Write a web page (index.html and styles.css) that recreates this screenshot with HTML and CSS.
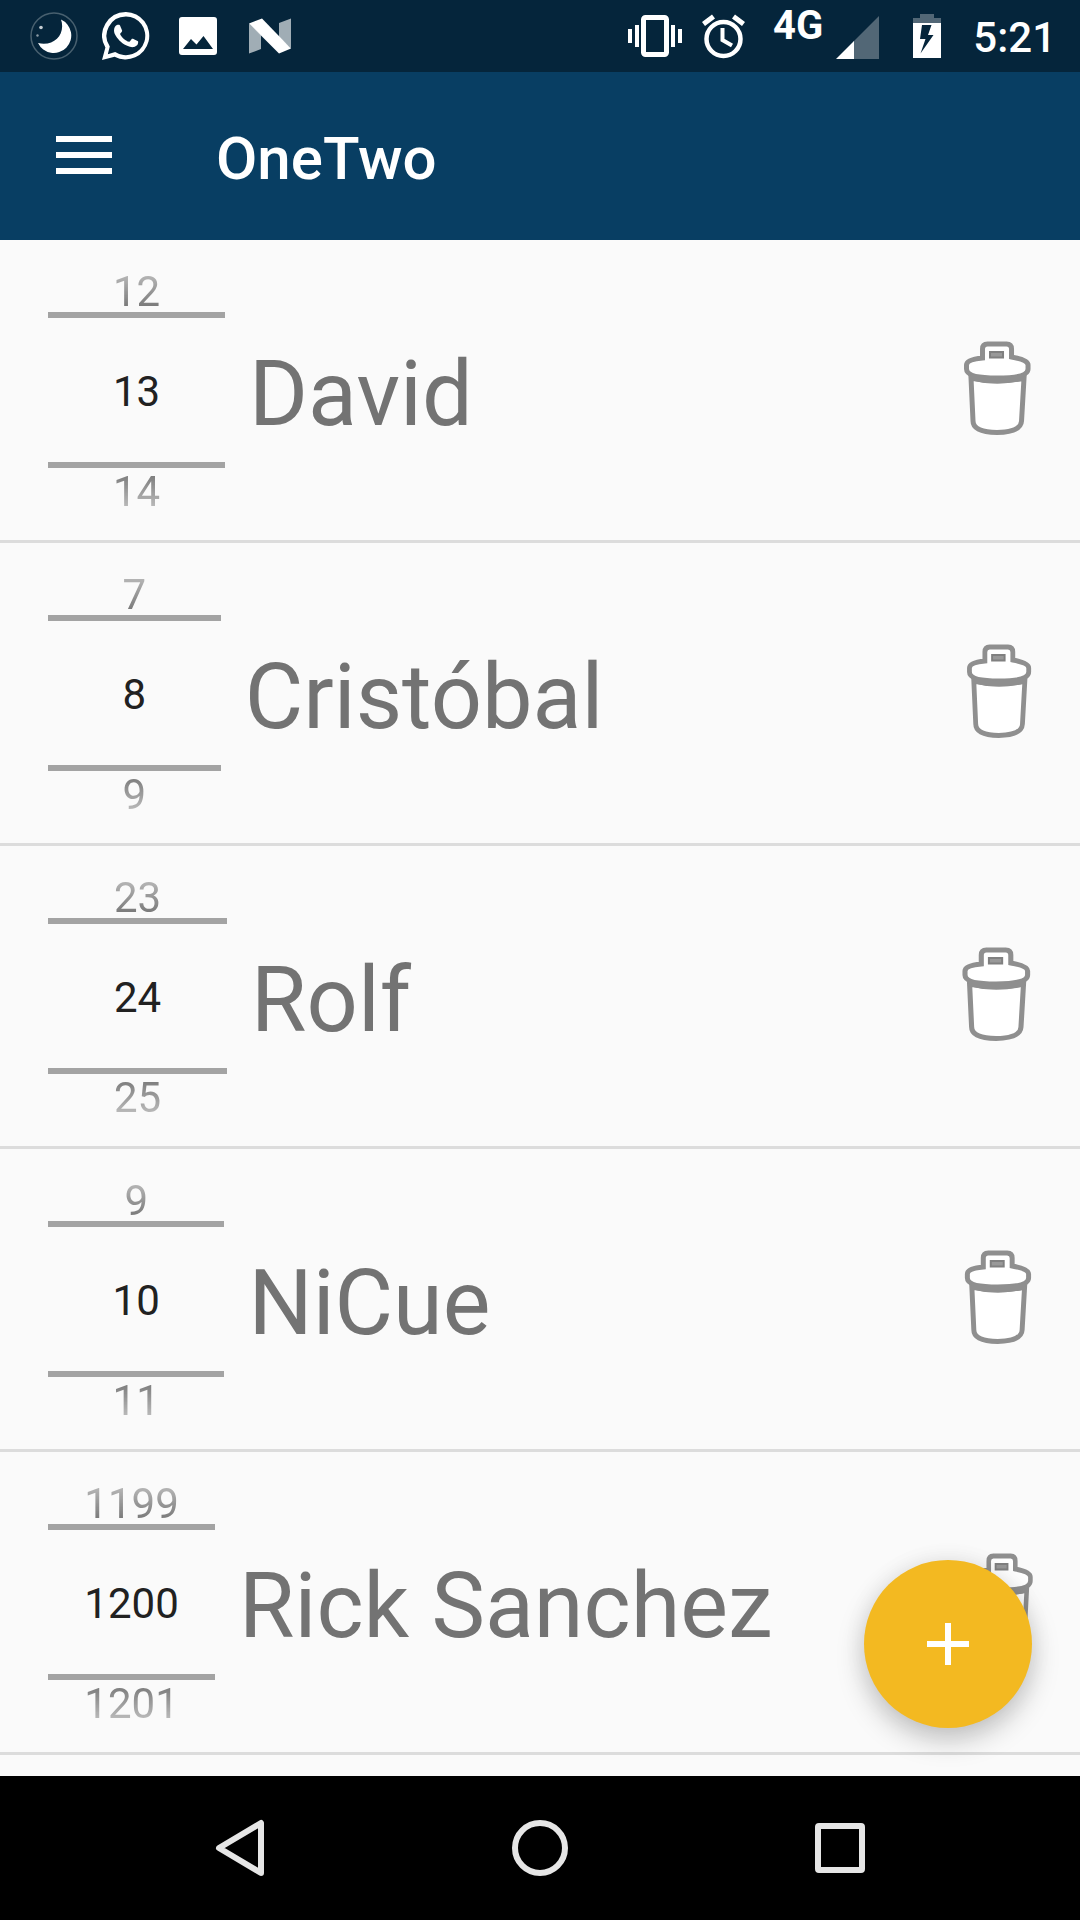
FILE: index.html
```html
<!DOCTYPE html>
<html lang="en">
<head>
<meta charset="utf-8">
<meta name="viewport" content="width=device-width, initial-scale=1">
<title>OneTwo</title>
<link rel="stylesheet" href="styles.css">
</head>
<body>
<svg class="defs" aria-hidden="true">
  <symbol id="trash" viewBox="8 20 118 100" preserveAspectRatio="none">
    <path class="trash-body" d="M41 58 L43 101 Q43 112 67 112.500 Q91 112 91.500 101 L94 58 Q67 64 41 58Z"/>
    <path class="trash-body" d="M52.500 38 L52.500 29 Q52.500 24 57.500 24 L76.500 24 Q81.500 24 81.500 29 L81.500 37 Q98 40 98 45 L98 49 Q98 58 67 58 Q36.500 58 36.500 49 L36.500 45 Q36.500 39.500 52.500 38Z"/>
    <path class="trash-seam" d="M40 57 Q67 64 95 57"/>
    <path class="trash-grip" d="M60 32H73V37.500H60Z"/>
  </symbol>
</svg>
<div class="screen">
  <div class="status-bar">
    <div class="status-group">
      <svg class="status-icon" viewBox="30 12 48 48" aria-hidden="true">
        <circle cx="54" cy="36" r="23" fill="none" stroke="#48606f" stroke-width="1.500"/>
        <path fill="#fff" d="M61 19.500A17.500 17.500 0 1 1 38 43C54 47 66 34 61 19.500Z"/>
        <circle cx="41" cy="27.500" r="1.800" fill="#c5cdd2"/><circle cx="37.500" cy="35.500" r="1.200" fill="#8d9ca6"/>
      </svg>
      <svg class="status-icon" viewBox="0 0 24 24" fill="#fff" aria-hidden="true">
        <path fill-rule="evenodd" d="M12 0A11.850 11.850 0 0 0 1.700 17.800L0 24L6.300 22.350A11.850 11.850 0 1 0 12 0ZM12 2.200A9.700 9.700 0 1 1 6.600 20L2.900 21.100L3.900 17.300A9.700 9.700 0 0 1 12 2.200Z"/>
        <path d="M17.472 14.382c-.297-.149-1.758-.867-2.030-.967-.273-.099-.471-.148-.670.150-.197.297-.767.966-.940 1.164-.173.199-.347.223-.644.075-.297-.150-1.255-.463-2.390-1.475-.883-.788-1.480-1.761-1.653-2.059-.173-.297-.018-.458.130-.606.134-.133.298-.347.446-.520.149-.174.198-.298.298-.497.099-.198.050-.371-.025-.520-.075-.149-.669-1.612-.916-2.207-.242-.579-.487-.500-.669-.510-.173-.008-.371-.010-.570-.010-.198 0-.520.074-.792.372-.272.297-1.040 1.016-1.040 2.479 0 1.462 1.065 2.875 1.213 3.074.149.198 2.096 3.200 5.077 4.487.709.306 1.262.489 1.694.625.712.227 1.360.195 1.871.118.571-.085 1.758-.719 2.006-1.413.248-.694.248-1.289.173-1.413-.074-.124-.272-.198-.570-.347"/>
      </svg>
      <svg class="status-icon" viewBox="174 12 48 48" aria-hidden="true">
        <path fill="#fff" fill-rule="evenodd" d="M182 17H214Q217 17 217 20V52Q217 55 214 55H182Q179 55 179 52V20Q179 17 182 17ZM183 49H213L203.500 36L196.500 44.500L191 39Z"/>
      </svg>
      <svg class="status-icon" viewBox="246 12 48 48" aria-hidden="true">
        <path fill="#a0adb5" d="M249 23.500L261 35V49L249 53.500ZM279 23L291 18.500V48.500L279 37Z"/>
        <path fill="#fff" d="M249 23.500L262 18.500L291 48.500L279 53.500Z"/>
      </svg>
    </div>
    <div class="status-group status-right">
      <svg class="status-icon" viewBox="633 12 48 48" overflow="visible" aria-hidden="true">
        <rect x="643.500" y="17.500" width="23" height="37" rx="2" fill="none" stroke="#fff" stroke-width="5"/>
        <path fill="#fff" d="M628 29h4v14h-4zM635 25h4v22h-4zM671 25h4v22h-4zM678 29h4v14h-4z"/>
      </svg>
      <svg class="status-icon" viewBox="703 12 48 48" overflow="visible" aria-hidden="true">
        <g fill="none" stroke="#fff"><circle cx="723.500" cy="39" r="17" stroke-width="4.500"/><path stroke-width="4" d="M722.500 28V40L732 45.500"/><path stroke-width="5" d="M703.500 24L713.500 16.500M733.500 16.500L743.500 24"/></g>
      </svg>
      <span class="network">4G</span>
      <svg class="status-icon signal" viewBox="834 12 48 48" aria-hidden="true">
        <path fill="#526776" d="M880 16V59H854V42Z"/><path fill="#fff" d="M855 41V59H837Z"/>
      </svg>
      <svg class="status-icon" viewBox="904 12 48 48" aria-hidden="true">
        <path fill="#526776" d="M914 23V18H921V14H935V18H942V23Z"/><path fill="#fff" fill-rule="evenodd" d="M914 23H942V58H914ZM923 25L921 39H926.500L921.500 53.500L934.500 35H929L932.500 25Z"/>
      </svg>
      <time class="clock">5:21</time>
    </div>
  </div>

  <header class="app-bar">
    <button class="icon-button" type="button" aria-label="Open menu">
      <svg class="menu-icon" viewBox="0 0 72 72"><path fill="#fff" d="M8 16h56v6H8zM8 32h56v6H8zM8 48h56v6H8z"/></svg>
    </button>
    <h1 class="title">OneTwo</h1>
  </header>

  <main class="content">
    <ul class="counters">
      <li class="counter">
        <div class="picker"><button class="step previous" type="button">12</button><input class="value" type="text" inputmode="numeric" value="13" aria-labelledby="name-1"><button class="step next" type="button">14</button></div>
        <span class="name" id="name-1">David</span>
        <button class="delete" type="button" aria-label="Delete David"><svg class="trash"><use href="#trash"/></svg></button>
      </li>
      <li class="counter">
        <div class="picker"><button class="step previous" type="button">7</button><input class="value" type="text" inputmode="numeric" value="8" aria-labelledby="name-2"><button class="step next" type="button">9</button></div>
        <span class="name" id="name-2">Cristóbal</span>
        <button class="delete" type="button" aria-label="Delete Cristóbal"><svg class="trash"><use href="#trash"/></svg></button>
      </li>
      <li class="counter">
        <div class="picker"><button class="step previous" type="button">23</button><input class="value" type="text" inputmode="numeric" value="24" aria-labelledby="name-3"><button class="step next" type="button">25</button></div>
        <span class="name" id="name-3">Rolf</span>
        <button class="delete" type="button" aria-label="Delete Rolf"><svg class="trash"><use href="#trash"/></svg></button>
      </li>
      <li class="counter">
        <div class="picker"><button class="step previous" type="button">9</button><input class="value" type="text" inputmode="numeric" value="10" aria-labelledby="name-4"><button class="step next" type="button">11</button></div>
        <span class="name" id="name-4">NiCue</span>
        <button class="delete" type="button" aria-label="Delete NiCue"><svg class="trash"><use href="#trash"/></svg></button>
      </li>
      <li class="counter">
        <div class="picker"><button class="step previous" type="button">1199</button><input class="value" type="text" inputmode="numeric" value="1200" aria-labelledby="name-5"><button class="step next" type="button">1201</button></div>
        <span class="name" id="name-5">Rick Sanchez</span>
        <button class="delete" type="button" aria-label="Delete Rick Sanchez"><svg class="trash"><use href="#trash"/></svg></button>
      </li>
    </ul>
    <button class="fab" type="button" aria-label="Add counter">
      <svg class="fab-icon" viewBox="0 0 42 42"><path fill="#fff" d="M18 0h6v18h18v6H24v18h-6V24H0v-6h18z"/></svg>
    </button>
  </main>

  <nav class="nav-bar" aria-label="System">
    <button class="nav-button" type="button" aria-label="Back"><svg class="nav-icon" viewBox="204 1812 72 72"><path d="M261 1823V1873L219 1848Z"/></svg></button>
    <button class="nav-button" type="button" aria-label="Home"><svg class="nav-icon" viewBox="504 1812 72 72"><circle cx="540" cy="1848" r="25"/></svg></button>
    <button class="nav-button" type="button" aria-label="Recent apps"><svg class="nav-icon" viewBox="804 1812 72 72"><rect x="818" y="1826" width="44" height="44" rx="1"/></svg></button>
  </nav>
</div>
</body>
</html>
```
FILE: styles.css
```css
* {
  box-sizing: border-box;
}

body {
  margin: 0;
  background: #fafafa;
  font-family: Roboto, "Liberation Sans", sans-serif;
}

button,
input {
  margin: 0;
  padding: 0;
  border: 0;
  background: none;
  font: inherit;
  color: inherit;
}

svg {
  display: block;
}

.defs {
  position: absolute;
  width: 0;
  height: 0;
}

.screen {
  display: flex;
  flex-direction: column;
  min-height: 100vh;
}

/* Status bar */
.status-bar {
  display: flex;
  justify-content: space-between;
  height: 72px;
  padding: 0 24px 0 30px;
  background: #05253b;
  color: #fff;
}

.status-group {
  display: flex;
  align-items: center;
  gap: 24px;
}

.status-right {
  gap: 22px;
}

.status-icon {
  width: 48px;
  height: 48px;
}

.network {
  align-self: flex-start;
  padding-top: 4px;
  font-size: 40px;
  font-weight: 700;
  line-height: 44px;
}

.signal {
  margin-left: -12px;
}

.clock {
  padding-top: 4px;
  font-size: 42px;
  font-weight: 500;
  line-height: 48px;
}

/* App bar */
.app-bar {
  display: flex;
  align-items: center;
  gap: 96px;
  height: 168px;
  padding: 0 48px;
  background: #083e63;
  color: #fff;
}

.menu-icon {
  width: 72px;
  height: 72px;
}

.title {
  margin: 0;
  padding-top: 6px;
  font-size: 60px;
  font-weight: 500;
  line-height: 72px;
}

/* Counter list */
.content {
  position: relative;
  flex: 1;
}

.counters {
  margin: 0;
  padding: 0;
  list-style: none;
}

.counter {
  display: flex;
  align-items: center;
  padding: 0 24px 0 48px;
  border-bottom: 3px solid #dcdcdc;
}

.picker {
  display: flex;
  flex: 1 0 161px;
  flex-direction: column;
  margin-right: 24px;
  color: #212121;
  font-size: 42px;
  line-height: 40px;
  text-align: center;
}

.step {
  height: 72px;
}

.previous {
  padding-top: 32px;
  -webkit-mask-image: linear-gradient(to bottom, transparent, rgba(0, 0, 0, 0.64));
  mask-image: linear-gradient(to bottom, transparent, rgba(0, 0, 0, 0.64));
}

.next {
  padding: 4px 0 28px;
  -webkit-mask-image: linear-gradient(to top, transparent, rgba(0, 0, 0, 0.64));
  mask-image: linear-gradient(to top, transparent, rgba(0, 0, 0, 0.64));
}

.value {
  width: 100%;
  height: 156px;
  padding-top: 2px;
  border: solid #a3a3a3;
  border-width: 6px 0;
  text-align: center;
}

.name {
  flex: 29 0 auto;
  padding-top: 10px;
  color: #737373;
  font-size: 90px;
  line-height: 108px;
  white-space: nowrap;
}

.delete {
  flex: 1 0 102px;
}

.trash {
  width: 100%;
  height: 100px;
}

.trash-body {
  fill: #fff;
  stroke: #8f8f8f;
  stroke-width: 5px;
}

.trash-seam {
  fill: none;
  stroke: #8f8f8f;
  stroke-width: 6px;
}

.trash-grip {
  fill: #999;
  stroke: #808080;
  stroke-width: 2px;
}

.fab {
  position: absolute;
  right: 48px;
  bottom: 48px;
  display: grid;
  place-items: center;
  width: 168px;
  height: 168px;
  border-radius: 50%;
  background: #f3b921;
  box-shadow: 0 12px 28px rgba(0, 0, 0, 0.22), 0 0 24px rgba(0, 0, 0, 0.06);
}

.fab-icon {
  width: 42px;
  height: 42px;
}

/* System navigation */
.nav-bar {
  display: flex;
  height: 144px;
  padding: 0 90px;
  background: #000;
}

.nav-button {
  display: grid;
  flex: 1;
  place-items: center;
}

.nav-icon {
  width: 72px;
  height: 72px;
  fill: none;
  stroke: #e6e6e6;
  stroke-linejoin: round;
  stroke-width: 6px;
}
```
